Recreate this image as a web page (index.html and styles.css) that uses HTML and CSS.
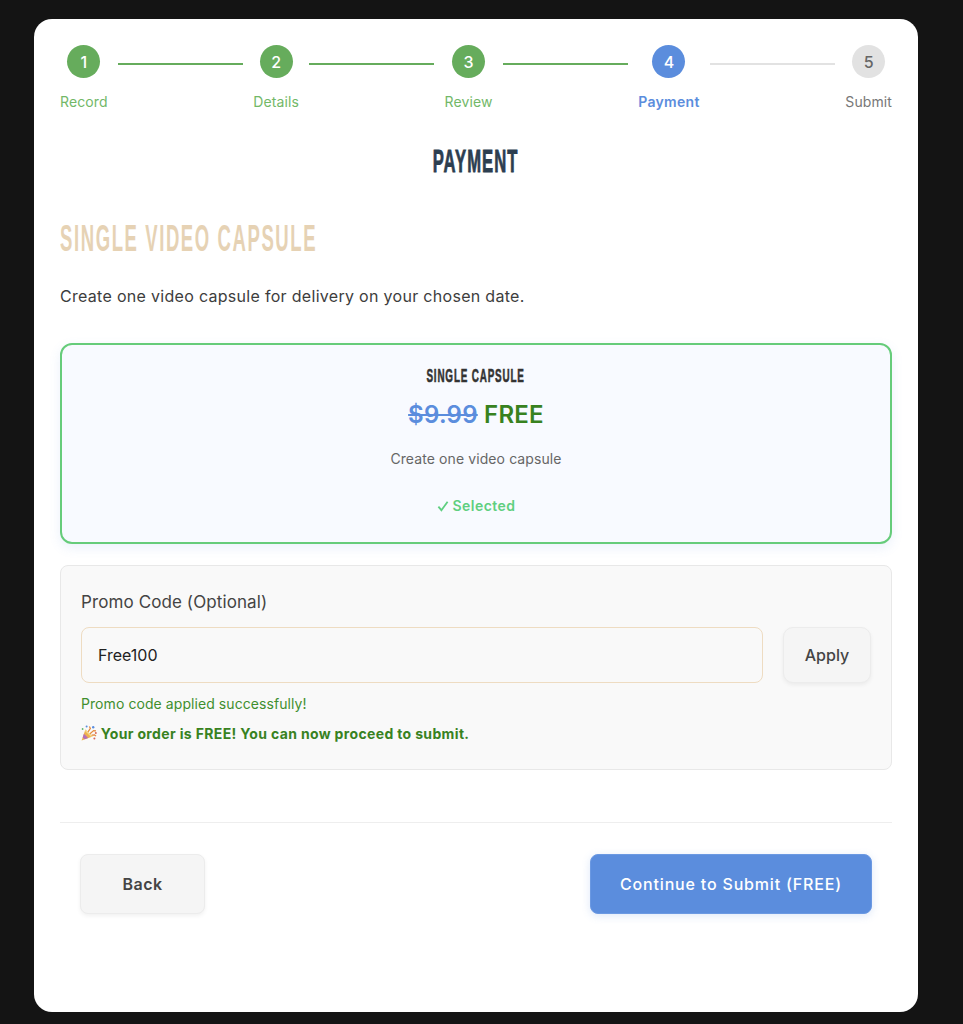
FILE: index.html
```html
<!DOCTYPE html>
<html lang="en">
<head>
<meta charset="utf-8">
<title>Payment</title>
<link rel="stylesheet" href="styles.css">
</head>
<body>
<main class="card">
  <ol class="stepper">
    <li class="step done"><span class="dot">1</span><span class="label">Record</span></li>
    <li class="line done"></li>
    <li class="step done"><span class="dot">2</span><span class="label">Details</span></li>
    <li class="line done"></li>
    <li class="step done"><span class="dot">3</span><span class="label">Review</span></li>
    <li class="line done"></li>
    <li class="step active"><span class="dot">4</span><span class="label">Payment</span></li>
    <li class="line"></li>
    <li class="step"><span class="dot">5</span><span class="label">Submit</span></li>
  </ol>

  <h1 class="page-title"><span class="cond">PAYMENT</span></h1>
  <h2 class="plan-title"><span class="cond">SINGLE VIDEO CAPSULE</span></h2>
  <p class="intro">Create one video capsule for delivery on your chosen date.</p>

  <section class="plan">
    <h3 class="plan-name"><span class="cond">SINGLE CAPSULE</span></h3>
    <div class="price"><s class="old">$9.99</s> <span class="free">FREE</span></div>
    <p class="desc">Create one video capsule</p>
    <div class="selected"><svg class="check" viewBox="0 0 12 12" aria-hidden="true"><path d="M1.4 6.6 4.4 10.2 10.6 1.8"/></svg> Selected</div>
  </section>

  <section class="promo">
    <label class="promo-label" for="code">Promo Code (Optional)</label>
    <div class="promo-row">
      <input class="promo-input" id="code" value="Free100">
      <button class="btn-apply" type="button">Apply</button>
    </div>
    <p class="ok">Promo code applied successfully!</p>
    <p class="free-note"><svg class="popper" viewBox="0 0 16 16" aria-hidden="true"><path d="M.6 15.6 4.4 4.4 11.6 11.6Z" fill="#eeb24f"/><path d="M1.7 12.4 2.9 8.8 7.2 13.1 3.6 14.3Z" fill="#b56fb8"/><path d="M4.4 4.4 11.6 11.6 10.2 12.1 4 5.9Z" fill="#f6d98a"/><path d="M7 6.8 9.4 3.4 8.4 1.4M9 8.8 12.6 5.6 15 5.9M10.6 10.2l3-.4 1.4 1.4" stroke="#e58a3c" stroke-width="1.2" fill="none"/><circle cx="12.2" cy="2.2" r="1.2" fill="#5b8ddd"/><circle cx="5.6" cy="1.6" r="1" fill="#5b8ddd"/><circle cx="14.8" cy="8" r="1" fill="#d8695a"/><circle cx="13.4" cy="13.6" r="1" fill="#d8695a"/><circle cx="1.6" cy="4" r=".9" fill="#62b66a"/></svg> Your order is FREE! You can now proceed to submit.</p>
  </section>

  <div class="actions">
    <button class="btn-back" type="button">Back</button>
    <button class="btn-next" type="button">Continue to Submit (FREE)</button>
  </div>
</main>
</body>
</html>
```
FILE: styles.css
```css
* { box-sizing: border-box; }
html, body { margin: 0; height: 100%; }
body {
  background: #141414;
  font-family: Inter, "Liberation Sans", sans-serif;
  color: #333;
  padding: 19px 45px 12px 34px;
}
.card {
  background: #fff;
  border-radius: 18px;
  height: 993px;
  padding: 26px 26px 0;
}
.stepper {
  display: flex;
  list-style: none;
  margin: 0;
  padding: 0;
}
.step {
  display: flex;
  flex-direction: column;
  align-items: center;
  color: #777;
}
.dot {
  width: 33px;
  height: 33px;
  border-radius: 50%;
  background: #e2e2e2;
  color: #666;
  display: flex;
  align-items: center;
  justify-content: center;
  font-size: 16px;
  font-weight: 500;
}
.label { font-size: 14px; line-height: 17px; margin-top: 15px; letter-spacing: .1px; }
.step.done .dot { background: #66ac5c; color: #fff; }
.step.done .label { color: #72b868; }
.step.active .dot { background: #5b8ddd; color: #fff; }
.step.active .label { color: #5b8ddd; font-weight: 600; letter-spacing: .3px; }
.line {
  flex: 1;
  height: 2px;
  background: #e2e2e2;
  margin: 18px 10.5px 0;
}
.line.done { background: #66ac5c; }

.cond {
  display: inline-block;
  font-family: "Liberation Sans Narrow", "Liberation Sans", sans-serif;
  font-weight: 700;
  white-space: nowrap;
}
.page-title {
  margin: 29px 0 0;
  font-size: 32px;
  line-height: 44px;
  text-align: center;
  color: #2c3e50;
}
.page-title .cond { transform: scaleX(.52); letter-spacing: 2px; -webkit-text-stroke: .9px #2c3e50; }
.plan-title {
  margin: 33px 0 0;
  font-size: 37px;
  line-height: 44px;
  color: #e6d2b4;
}
.plan-title .cond { transform: scaleX(.5); transform-origin: left; letter-spacing: 3.2px; }
.intro {
  margin: 23px 0 0;
  font-size: 16px;
  line-height: 24px;
  letter-spacing: .3px;
  color: #3d3d3d;
}
.plan {
  margin-top: 35px;
  height: 201px;
  border: 2px solid #66cc7a;
  border-radius: 12px;
  background: #f8faff;
  box-shadow: 0 4px 12px rgba(91, 141, 221, .12);
  text-align: center;
  padding-top: 18px;
}
.plan-name {
  margin: 0;
  font-size: 19px;
  line-height: 25px;
  color: #333;
}
.plan-name .cond { transform: scaleX(.52); letter-spacing: 1.6px; -webkit-text-stroke: .6px #333; }
.price {
  margin-top: 12px;
  font-size: 24px;
  line-height: 29px;
  font-weight: 600;
  letter-spacing: .25px;
}
.old { color: #5b8ddd; }
.free { color: #38821f; }
.desc {
  margin: 21px 0 0;
  font-size: 14px;
  line-height: 17px;
  letter-spacing: .1px;
  color: #666;
}
.selected {
  margin-top: 30px;
  font-size: 14px;
  line-height: 17px;
  font-weight: 600;
  letter-spacing: .45px;
  color: #5fcf80;
}
.check {
  width: 12px;
  height: 12px;
  vertical-align: -1px;
  fill: none;
  stroke: #5fcf80;
  stroke-width: 1.8;
}
.promo {
  margin-top: 21px;
  height: 205px;
  border: 1px solid #e8e8e8;
  border-radius: 8px;
  background: #f9f9f9;
  padding: 24px 20px 0;
}
.promo-label {
  display: block;
  font-size: 17px;
  line-height: 24px;
  font-weight: 400;
  letter-spacing: .1px;
  color: #444;
}
.promo-row {
  display: flex;
  gap: 20px;
  margin-top: 13px;
}
.promo-input {
  flex: 1;
  min-width: 0;
  height: 56px;
  border: 1px solid #eedcc2;
  border-radius: 8px;
  background: #f9f9f9;
  padding: 0 16px;
  font: 400 16px Inter, "Liberation Sans", sans-serif;
  color: #222;
}
.btn-apply {
  width: 88px;
  height: 56px;
  border: 1px solid #ececec;
  border-radius: 10px;
  background: #f5f5f5;
  box-shadow: 0 2px 4px rgba(0, 0, 0, .06);
  font: 500 16px Inter, "Liberation Sans", sans-serif;
  color: #444;
}
.ok {
  margin: 12px 0 0;
  font-size: 14px;
  line-height: 17px;
  letter-spacing: .07px;
  color: #3f8f2e;
}
.free-note {
  margin: 13px 0 0;
  font-size: 14px;
  line-height: 17px;
  font-weight: 700;
  letter-spacing: .35px;
  color: #38821f;
}
.popper { width: 16px; height: 16px; vertical-align: -2px; }
.actions {
  margin-top: 52px;
  border-top: 1px solid #eee;
  padding: 31px 20px 0;
  display: flex;
  justify-content: space-between;
}
.btn-back, .btn-next {
  height: 60px;
  border-radius: 8px;
  font: 600 16px Inter, "Liberation Sans", sans-serif;
  letter-spacing: .5px;
}
.btn-back {
  width: 125px;
  border: 1px solid #ececec;
  background: #f5f5f5;
  color: #444;
  box-shadow: 0 2px 4px rgba(0, 0, 0, .06);
}
.btn-next {
  width: 282px;
  border: 1px solid #6b99e2;
  background: #5b8ddd;
  color: #fff;
  font-weight: 500;
  letter-spacing: .82px;
  box-shadow: 0 2px 8px rgba(91, 141, 221, .2);
}
```
